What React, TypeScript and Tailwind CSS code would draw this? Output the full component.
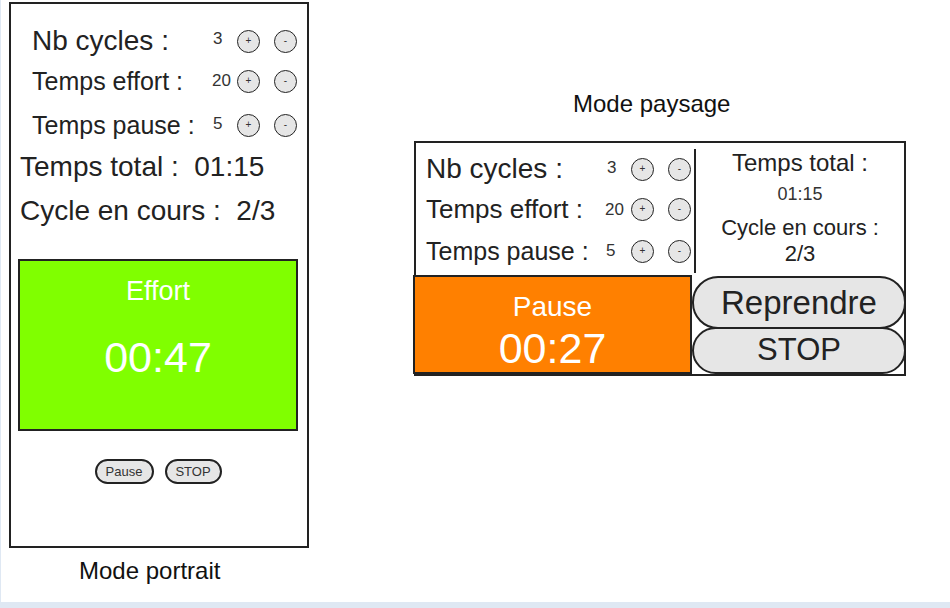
import React from "react";

const font = { fontFamily: '"Liberation Sans", Arial, sans-serif' };

function Circ({ s }: { s: string }) {
  return (
    <div className="w-[23px] h-[23px] shrink-0 rounded-full border-[1.5px] border-[#222] bg-[#e6e6e6] flex items-center justify-center text-[10px] leading-none text-[#333]">
      {s}
    </div>
  );
}

function PRow({
  label,
  value,
  size,
  labelW,
  valW,
  mt,
  valShift,
}: {
  label: string;
  value: string;
  size: string;
  labelW: string;
  valW: string;
  mt: string;
  valShift: string;
}) {
  return (
    <div className={`flex items-center h-[32px] ${mt}`}>
      <div className={`${labelW} shrink-0 ${size} text-[#222] whitespace-nowrap leading-[32px]`}>{label}</div>
      <div className={`${valW} shrink-0 text-[17px] text-[#333] leading-none ${valShift}`}>{value}</div>
      <Circ s="+" />
      <div className="w-[14px] shrink-0" />
      <Circ s="-" />
    </div>
  );
}

export default function App() {
  return (
    <div style={font} className="w-[950px] h-[608px] bg-[#dfe8f3] overflow-hidden">
      <div className="ml-[1px] w-[949px] h-[602px] bg-white flex items-start">
        {/* Portrait */}
        <div className="ml-[8px] mt-[2px] flex flex-col">
          <div className="w-[300px] h-[546px] border-2 border-[#222] box-border flex flex-col">
            <div className="pl-[21px]">
              <PRow label="Nb cycles :" value="3" size="text-[28px]" labelW="w-[180px]" valW="w-[25px] pl-[1px]" mt="mt-[21px]" valShift="-mt-[5px]" />
              <PRow label="Temps effort :" value="20" size="text-[25px]" labelW="w-[180px]" valW="w-[25px]" mt="mt-[8px]" valShift="-mt-[1px]" />
              <PRow label="Temps pause :" value="5" size="text-[25px]" labelW="w-[180px]" valW="w-[25px] pl-[1px]" mt="mt-[12px]" valShift="-mt-[3px]" />
            </div>
            <div className="pl-[9px] text-[28px] leading-[32px] text-[#222] mt-[10px] whitespace-pre">Temps total :  01:15</div>
            <div className="pl-[9px] text-[28px] leading-[32px] text-[#222] mt-[12px] whitespace-pre">Cycle en cours :  2/3</div>
            <div className="ml-[7px] mt-[32px] w-[280px] h-[172px] border-2 border-[#222] bg-[#80ff00] flex flex-col items-center text-white">
              <div className="pt-[15px] text-[27px] leading-[30px]">Effort</div>
              <div className="mt-[27px] text-[43px] leading-[48px]">00:47</div>
            </div>
            <div className="ml-[7px] w-[280px] mt-[28px] flex justify-center gap-[11px]">
              <div className="w-[59px] h-[25px] rounded-full border-2 border-[#222] bg-[#e6e6e6] flex items-center justify-center text-[13px] text-[#333]">Pause</div>
              <div className="w-[57px] h-[25px] rounded-full border-2 border-[#222] bg-[#e6e6e6] flex items-center justify-center text-[13px] text-[#333]">STOP</div>
            </div>
          </div>
          <div className="ml-[70px] mt-[9px] text-[24px] leading-[28px] text-[#111]">Mode portrait</div>
        </div>

        {/* Landscape */}
        <div className="ml-[105px] flex flex-col">
          <div className="ml-[159px] mt-[90px] text-[24px] leading-[28px] text-[#111]">Mode paysage</div>
          <div className="mt-[23px] w-[492px] h-[235px] border-2 border-[#222] box-border flex flex-col">
            <div className="h-[133px] flex">
              <div className="w-[278px] shrink-0 pl-[10px]">
                <PRow label="Nb cycles :" value="3" size="text-[28px]" labelW="w-[179px]" valW="w-[26px] pl-[2px]" mt="mt-[10px]" valShift="-mt-[4px]" />
                <PRow label="Temps effort :" value="20" size="text-[26px]" labelW="w-[179px]" valW="w-[26px]" mt="mt-[8px]" valShift="" />
                <PRow label="Temps pause :" value="5" size="text-[25px]" labelW="w-[179px]" valW="w-[26px] pl-[1px]" mt="mt-[10px]" valShift="-mt-[1px]" />
              </div>
              <div className="mt-[6px] h-[124px] w-[2px] shrink-0 bg-[#222]" />
              <div className="flex-1 flex flex-col items-center text-[#222]">
                <div className="mt-[6px] text-[24px] leading-[28px]">Temps total :</div>
                <div className="mt-[6px] text-[18px] leading-[22px] text-[#333]">01:15</div>
                <div className="mt-[9px] text-[22px] leading-[28px]">Cycle en cours :</div>
                <div className="text-[22px] leading-[24px]">2/3</div>
              </div>
            </div>
            <div className="flex">
              <div className="-ml-[3px] shrink-0 w-[279px] h-[99px] border-2 border-[#222] bg-[#ff8000] flex flex-col items-center text-white">
                <div className="pt-[15px] text-[28px] leading-[30px]">Pause</div>
                <div className="mt-[4px] text-[43px] leading-[44px]">00:27</div>
              </div>
              <div className="shrink-0 flex flex-col">
                <div className="mt-[1px] w-[214px] h-[53px] rounded-[26px] border-2 border-[#222] bg-[#e6e6e6] flex items-center justify-center text-[33px] text-[#222]">Reprendre</div>
                <div className="-mt-[2px] w-[214px] h-[47px] rounded-[24px] border-2 border-[#222] bg-[#e6e6e6] flex items-center justify-center text-[31px] text-[#222]">STOP</div>
              </div>
            </div>
          </div>
        </div>
      </div>
    </div>
  );
}
